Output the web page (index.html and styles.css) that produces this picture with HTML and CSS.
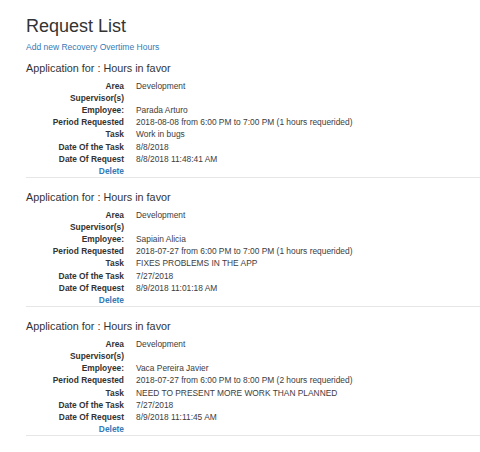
FILE: index.html
```html
<!DOCTYPE html>
<html lang="en">
<head>
<meta charset="utf-8">
<title>Request List</title>
<link rel="stylesheet" href="styles.css">
</head>
<body>
<main class="page">
  <h2 class="title">Request List</h2>
  <a class="add-link" href="#">Add new Recovery Overtime Hours</a>

  <section class="request">
    <h4 class="request-title">Application for : Hours in favor</h4>
    <dl class="details">
      <dt>Area</dt><dd>Development</dd>
      <dt>Supervisor(s)</dt><dd></dd>
      <dt>Employee:</dt><dd>Parada Arturo</dd>
      <dt>Period Requested</dt><dd>2018-08-08 from 6:00 PM to 7:00 PM (1 hours requerided)</dd>
      <dt>Task</dt><dd>Work in bugs</dd>
      <dt>Date Of the Task</dt><dd>8/8/2018</dd>
      <dt>Date Of Request</dt><dd>8/8/2018 11:48:41 AM</dd>
      <dt><a class="delete" href="#">Delete</a></dt><dd></dd>
    </dl>
  </section>

  <section class="request">
    <h4 class="request-title">Application for : Hours in favor</h4>
    <dl class="details">
      <dt>Area</dt><dd>Development</dd>
      <dt>Supervisor(s)</dt><dd></dd>
      <dt>Employee:</dt><dd>Sapiain Alicia</dd>
      <dt>Period Requested</dt><dd>2018-07-27 from 6:00 PM to 7:00 PM (1 hours requerided)</dd>
      <dt>Task</dt><dd>FIXES PROBLEMS IN THE APP</dd>
      <dt>Date Of the Task</dt><dd>7/27/2018</dd>
      <dt>Date Of Request</dt><dd>8/9/2018 11:01:18 AM</dd>
      <dt><a class="delete" href="#">Delete</a></dt><dd></dd>
    </dl>
  </section>

  <section class="request">
    <h4 class="request-title">Application for : Hours in favor</h4>
    <dl class="details">
      <dt>Area</dt><dd>Development</dd>
      <dt>Supervisor(s)</dt><dd></dd>
      <dt>Employee:</dt><dd>Vaca Pereira Javier</dd>
      <dt>Period Requested</dt><dd>2018-07-27 from 6:00 PM to 8:00 PM (2 hours requerided)</dd>
      <dt>Task</dt><dd>NEED TO PRESENT MORE WORK THAN PLANNED</dd>
      <dt>Date Of the Task</dt><dd>7/27/2018</dd>
      <dt>Date Of Request</dt><dd>8/9/2018 11:11:45 AM</dd>
      <dt><a class="delete" href="#">Delete</a></dt><dd></dd>
    </dl>
  </section>
</main>
</body>
</html>
```
FILE: styles.css
```css
html, body {
  margin: 0;
  padding: 0;
  background: #ffffff;
}

body {
  font-family: "Liberation Sans", Arial, sans-serif;
  font-size: 8.4px;
  line-height: 12px;
  color: #333333;
}

.page {
  padding: 15.5px 0 0 26px;
}

.title {
  margin: 0;
  font-size: 18px;
  line-height: 20px;
  font-weight: 500;
  color: #333333;
}

.add-link {
  display: block;
  margin-top: 5.5px;
  font-size: 8.5px;
  line-height: 12px;
  color: #337ab7;
  text-decoration: none;
}

.request {
  border-bottom: 1px solid #e6e6e6;
}

.request-title {
  margin: 8.5px 0 0;
  font-size: 10.8px;
  line-height: 12px;
  font-weight: 500;
  color: #333333;
}

.request + .request .request-title {
  margin-top: 12.5px;
}

.details {
  display: grid;
  grid-template-columns: 98px 1fr;
  column-gap: 12px;
  margin: 6px 0 0;
  line-height: 12.2px;
}

.details dt {
  text-align: right;
  font-weight: bold;
  white-space: nowrap;
}

.details dd {
  margin: 0;
  white-space: nowrap;
  color: #3d3d3d;
}

.delete {
  color: #337ab7;
  text-decoration: none;
  font-weight: bold;
}
```
